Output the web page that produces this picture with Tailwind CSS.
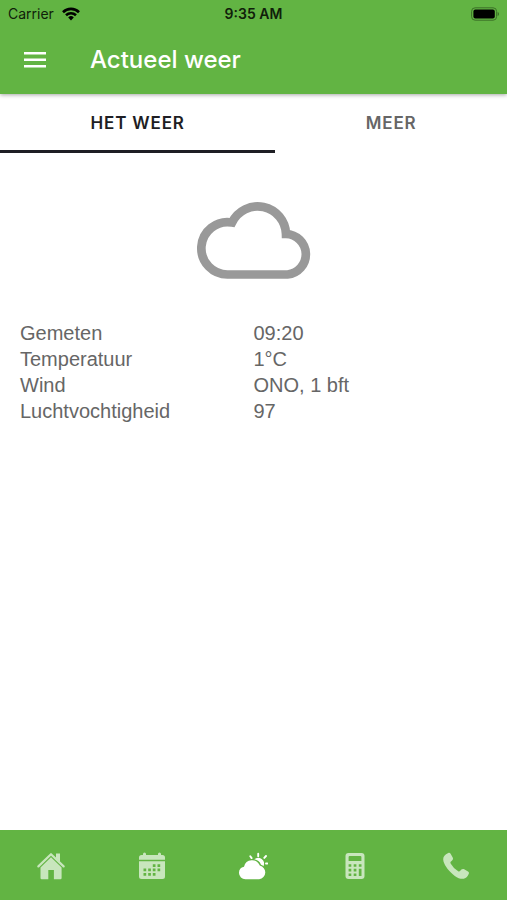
<!DOCTYPE html>
<html lang="nl">
<head>
  <meta charset="UTF-8" />
  <meta name="viewport" content="width=device-width, initial-scale=1" />
  <title>Actueel weer</title>
  <script src="https://cdn.jsdelivr.net/npm/@tailwindcss/browser@4"></script>
</head>
<body class="min-h-screen flex flex-col bg-white font-['Liberation_Sans',Arial,sans-serif] text-[#666666]">

  <header class="relative bg-[#62b443] shadow-[0_1px_4px_rgba(0,0,0,0.35)]">
    <!-- Status bar -->
    <div class="grid grid-cols-3 items-center h-7 px-2 text-sm text-[#10200a] font-[Inter,sans-serif]">
      <div class="flex items-center gap-2">
        <span>Carrier</span>
        <svg class="w-[18px] h-[14px]" viewBox="0 0 18 14" fill="none" stroke="#000" stroke-width="2.6">
          <path d="M1 5.2a11.4 11.4 0 0 1 16 0" />
          <path d="M4 8.3a7.2 7.2 0 0 1 10 0" />
          <path d="M6.2 10.4a4 4 0 0 1 5.6 0L9 13.4z" fill="#000" stroke="none" />
        </svg>
      </div>
      <span class="text-center font-semibold">9:35 AM</span>
      <svg class="w-7 h-[14px] justify-self-end" viewBox="0 0 28 14">
        <rect x="0.6" y="0.8" width="25" height="12.4" rx="3.5" fill="none" stroke="#3c7028" />
        <rect x="2.4" y="2.6" width="21.4" height="8.8" rx="2" fill="#000" />
        <path d="M26.600 5v4c.9-.4 1.400-1.100 1.400-2s-.5-1.600-1.400-2z" fill="#3c7028" />
      </svg>
    </div>

    <!-- Toolbar -->
    <div class="flex items-center gap-10 h-[66px] pl-5 pb-0.5 text-white">
      <button type="button" aria-label="Menu" class="p-1">
        <svg class="w-[22px] h-4" viewBox="0 0 22 16" fill="currentColor">
          <path d="M0 0h22v2.600H0zM0 6.500h22v2.600H0zM0 13h22v2.600H0z" />
        </svg>
      </button>
      <h1 class="text-2xl font-medium font-[Inter,sans-serif]">Actueel weer</h1>
    </div>
  </header>

  <nav class="flex h-[59px] text-[17px] font-semibold tracking-wider font-[Inter,sans-serif]">
    <button type="button" class="flex-auto pt-1 border-b-3 border-[#1e1e24] text-[#1e1e24]">HET WEER</button>
    <button type="button" class="flex-auto pt-1 border-b-3 border-transparent">MEER</button>
  </nav>

  <main class="flex-1 pt-[47px]">
    <svg class="w-[120px] h-[84px] mx-auto" viewBox="0 0 120 84" fill="none" stroke="#999" stroke-width="8.700">
      <path d="M34.500 74.500a26.200 26.200 0 1 1 3.500-52A28.400 28.400 0 0 1 92 34a20.300 20.300 0 0 1 1.500 40.500z" />
    </svg>

    <table class="w-full table-fixed mt-9 text-xl leading-[26px] text-left">
      <tbody>
        <tr>
          <th scope="row" class="pl-5 font-normal">Gemeten</th>
          <td>09:20</td>
        </tr>
        <tr>
          <th scope="row" class="pl-5 font-normal">Temperatuur</th>
          <td>1°C</td>
        </tr>
        <tr>
          <th scope="row" class="pl-5 font-normal">Wind</th>
          <td>ONO, 1 bft</td>
        </tr>
        <tr>
          <th scope="row" class="pl-5 font-normal">Luchtvochtigheid</th>
          <td>97</td>
        </tr>
      </tbody>
    </table>
  </main>

  <!-- Bottom navigation -->
  <nav class="grid grid-cols-5 h-[70px] pt-0.5 bg-[#62b443] text-[#c8e6bd]">
    <a href="#home" aria-label="Home" class="flex items-center justify-center">
      <svg class="w-7 h-7" viewBox="0 0 28 28" fill="currentColor">
        <path d="M1.400 14.400 14 2.200l12.600 12.200" fill="none" stroke="currentColor" stroke-width="2.200" stroke-linecap="round" stroke-linejoin="round" />
        <path d="M19 1.500h4v8.500l-4-3.800z" />
        <path d="M14 5.300 3.500 15.500V26a1.200 1.200 0 0 0 1.200 1.200h6.600V18h5.600v9.200h6.500a1.200 1.200 0 0 0 1.200-1.200V15.500z" />
      </svg>
    </a>
    <a href="#agenda" aria-label="Agenda" class="flex items-center justify-center">
      <svg class="w-7 h-7" viewBox="0 0 28 28" fill="currentColor">
        <path d="M1 7.800V5.500a2.500 2.500 0 0 1 2.500-2.500H5V2a1.500 1.500 0 0 1 3 0v1h12V2a1.500 1.500 0 0 1 3 0v1h1.500A2.500 2.500 0 0 1 27 5.500v2.300z" />
        <path d="M1 9.300h26v15.200a2.500 2.500 0 0 1-2.500 2.500h-21A2.500 2.500 0 0 1 1 24.500z" />
        <path d="M14.800 12.200h2.700v2.700h-2.700zM19.500 12.200h2.700v2.700h-2.700zM5.500 16.600h2.700v2.700H5.500zM10.200 16.600h2.700v2.700h-2.700zM14.800 16.600h2.700v2.700h-2.700zM19.500 16.600h2.700v2.700h-2.700zM5.500 21h2.700v2.700H5.500zM10.200 21h2.700v2.700h-2.700zM14.800 21h2.700v2.700h-2.700z" fill="#62b443" />
      </svg>
    </a>
    <a href="#weer" aria-label="Weer" class="flex items-center justify-center text-white">
      <svg class="w-[30px] h-7" viewBox="0 0 30 28" fill="currentColor">
        <path d="M20.200 1.800v2.400M12.300 4.300l1.300 1.800M28 4l-1.700 1.900M28 11.500h1.400" fill="none" stroke="currentColor" stroke-width="1.900" stroke-linecap="round" />
        <path d="M16.300 7.300a5.900 5.900 0 0 1 9.200 6.900c-.8-.8-1.600-1.300-2.500-1.500a9 9 0 0 0-6.700-5.400z" />
        <path d="M7.500 27.200A6.400 6.400 0 0 1 1 20.900a6.300 6.300 0 0 1 5-6.200 8.300 8.300 0 0 1 15.800-1.100 6.900 6.900 0 0 1-.6 13.600z" />
      </svg>
    </a>
    <a href="#calculator" aria-label="Calculator" class="flex items-center justify-center">
      <svg class="w-7 h-7" viewBox="0 0 28 28" fill="currentColor">
        <rect x="4.500" y="1" width="19" height="26" rx="3" />
        <path d="M8.600 4h10.800a1 1 0 0 1 1 1v4H7.600V5a1 1 0 0 1 1-1zM7.600 12.200h2.700v2.600H7.600zM12.700 12.200h2.700v2.600h-2.700zM17.800 12.200h2.700v2.600h-2.700zM7.600 16.800h2.700v2.600H7.600zM12.700 16.800h2.700v2.600h-2.700zM7.600 21.400h2.700V24H7.600zM12.700 21.400h2.700V24h-2.700zM17.800 16.800h2.700V24h-2.700z" fill="#62b443" />
      </svg>
    </a>
    <a href="#contact" aria-label="Contact" class="flex items-center justify-center">
      <svg class="w-7 h-7" viewBox="0 0 28 28" fill="currentColor">
        <path d="M4 2.200 6.300 1c1-.4 1.700-.1 2.300.8l2.100 3.700c.6 1.200.3 2.200-.6 3L8.700 9.700c-.4.500-.4 1 .1 2a20 20 0 0 0 7.400 7.500c.8.400 1.300.3 1.800-.2l1.400-1.400c.8-.8 1.800-.9 2.800-.3l3.800 2.300c.9.600 1.200 1.300.8 2.200-1 2.500-2.500 4.200-5 4.900-2.600.6-5.800-.5-9-2.800C7.300 19.900 3 14.100 1.500 9.500.7 6.400 1.500 3.900 4 2.200z" />
      </svg>
    </a>
  </nav>

</body>
</html>
